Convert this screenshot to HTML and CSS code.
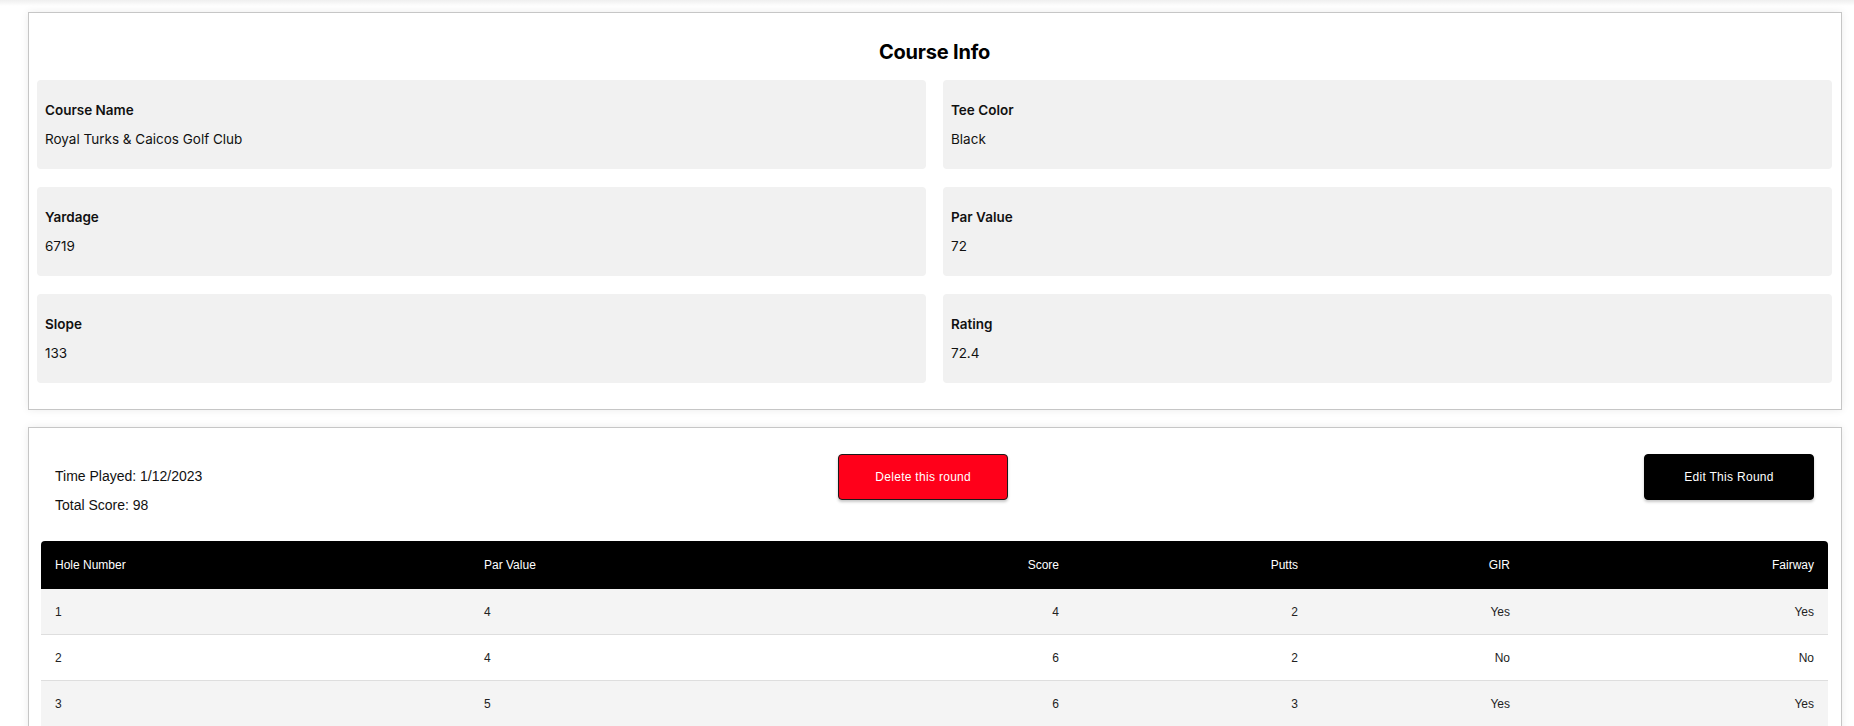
FILE: index.html
```html
<!DOCTYPE html>
<html lang="en">
<head>
<meta charset="utf-8">
<title>Round Details</title>
<link rel="stylesheet" href="styles.css">
</head>
<body>
<main class="page">
  <section class="card course-card">
    <h2 class="course-title">Course Info</h2>
    <div class="info-grid">
      <div class="info-box"><div class="info-label">Course Name</div><div class="info-value">Royal Turks &amp; Caicos Golf Club</div></div>
      <div class="info-box"><div class="info-label">Tee Color</div><div class="info-value">Black</div></div>
      <div class="info-box"><div class="info-label">Yardage</div><div class="info-value">6719</div></div>
      <div class="info-box"><div class="info-label">Par Value</div><div class="info-value">72</div></div>
      <div class="info-box"><div class="info-label">Slope</div><div class="info-value">133</div></div>
      <div class="info-box"><div class="info-label">Rating</div><div class="info-value">72.4</div></div>
    </div>
  </section>

  <section class="card round-card">
    <div class="round-head">
      <div class="round-meta">
        <p class="meta-line">Time Played: 1/12/2023</p>
        <p class="meta-line">Total Score: 98</p>
      </div>
      <button class="btn btn-delete">Delete this round</button>
      <button class="btn btn-edit">Edit This Round</button>
    </div>
    <table class="score-table">
      <colgroup>
        <col class="c1"><col class="c2"><col class="c3"><col class="c4"><col class="c5"><col class="c6">
      </colgroup>
      <thead>
        <tr><th class="left">Hole Number</th><th class="left">Par Value</th><th>Score</th><th>Putts</th><th>GIR</th><th>Fairway</th></tr>
      </thead>
      <tbody>
        <tr><td class="left">1</td><td class="left">4</td><td>4</td><td>2</td><td>Yes</td><td>Yes</td></tr>
        <tr><td class="left">2</td><td class="left">4</td><td>6</td><td>2</td><td>No</td><td>No</td></tr>
        <tr><td class="left">3</td><td class="left">5</td><td>6</td><td>3</td><td>Yes</td><td>Yes</td></tr>
      </tbody>
    </table>
  </section>
</main>
</body>
</html>
```

FILE: styles.css
```css
html {
  overflow: hidden;
}

body {
  margin: 0;
  background: #ffffff linear-gradient(to bottom, #efefef 0, #ffffff 6px) no-repeat;
  font-family: "Liberation Sans", Arial, sans-serif;
  color: #000;
}

.page {
  padding: 12px 12px 0 28px;
  display: flex;
  flex-direction: column;
  gap: 17px;
}

.card {
  background: #fff;
  border: 1px solid #c6c6c6;
  box-shadow: 0 0 8px rgba(0, 0, 0, 0.08);
}

/* Course info card */
.course-card {
  padding: 27px 9px 26px 8px;
  font-family: Inter, "Noto Sans", sans-serif;
}

.course-title {
  margin: 0 0 16px;
  text-align: center;
  font-size: 20px;
  line-height: 24px;
  font-weight: 700;
  letter-spacing: -0.2px;
}

.info-grid {
  display: grid;
  grid-template-columns: 1fr 1fr;
  column-gap: 17px;
  row-gap: 18px;
}

.info-box {
  height: 89px;
  box-sizing: border-box;
  padding: 22px 8px 0;
  background: #f1f1f1;
  border-radius: 4px;
}

.info-label {
  font-size: 13.5px;
  line-height: 16px;
  font-weight: 600;
  color: #111;
  margin-bottom: 13px;
}

.info-value {
  font-size: 13.5px;
  line-height: 16px;
  color: #111;
}

/* Round card */
.round-card {
  padding: 26px 13px 12px 12px;
}

.round-head {
  display: flex;
  justify-content: space-between;
  align-items: flex-start;
  padding: 0 14px;
  margin-bottom: 26px;
}

.round-meta {
  padding-top: 12px;
  display: flex;
  flex-direction: column;
  gap: 9px;
}

.meta-line {
  margin: 0;
  font-size: 14px;
  line-height: 20px;
  color: #111;
}

.btn {
  width: 170px;
  height: 46px;
  border-radius: 4px;
  font-family: "Liberation Sans", Arial, sans-serif;
  font-size: 12px;
  letter-spacing: 0.3px;
  color: #fff;
  cursor: pointer;
  box-shadow: 0 2px 3px rgba(0, 0, 0, 0.22);
}

.btn-delete {
  background: #ff001a;
  border: 1px solid #1a1a1a;
}

.btn-edit {
  background: #000;
  border: 1px solid #000;
}

.score-table {
  width: 100%;
  table-layout: fixed;
  border-collapse: collapse;
  font-size: 12px;
}

.c1 { width: 429px; }
.c2 { width: 300px; }
.c3 { width: 303px; }
.c4 { width: 239px; }
.c5 { width: 212px; }
.c6 { width: 304px; }

.score-table thead th {
  background: #000;
  color: #fff;
  font-weight: 400;
  height: 48px;
  padding: 0 14px;
  text-align: right;
}

.score-table thead th:first-child {
  border-top-left-radius: 4px;
}

.score-table thead th:last-child {
  border-top-right-radius: 4px;
}

.score-table td {
  height: 45px;
  padding: 0 14px;
  text-align: right;
  color: #222;
  border-bottom: 1px solid #dedede;
}

.score-table tbody tr:nth-child(odd) td {
  background: #f4f4f4;
}

.score-table .left {
  text-align: left;
}
```
